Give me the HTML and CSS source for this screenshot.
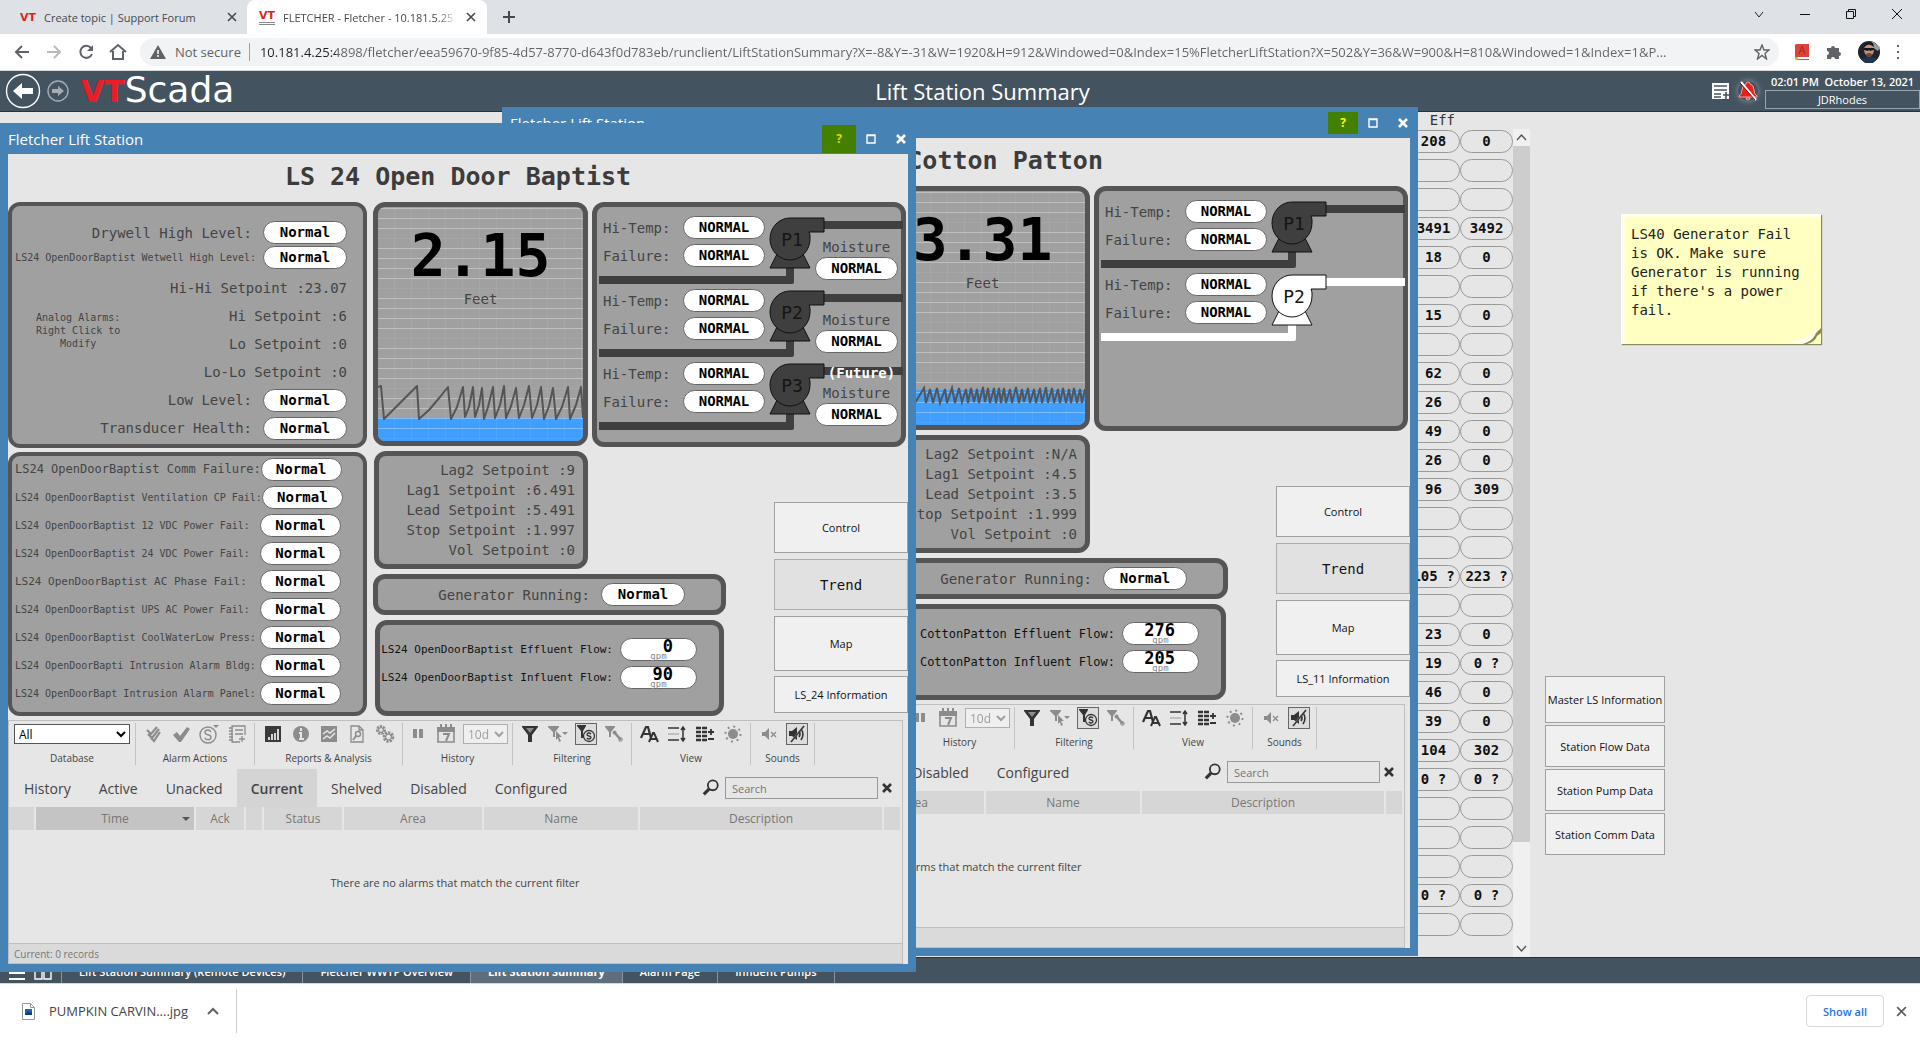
FILE: index.html
```html
<!DOCTYPE html>
<html lang="en">
<head>
    <meta charset="UTF-8">
    <meta name="viewport" content="width=device-width, initial-scale=1.0">
    <title>FLETCHER - Fletcher - 10.181.5.25</title>
    <link rel="stylesheet" href="styles.css">
</head>
<body>

<!-- icons -->
<svg class="sprite" aria-hidden="true">
    <symbol id="i-x" viewBox="0 0 10 10"><path d="M1 1l8 8M9 1l-8 8" fill="none" stroke="currentColor" stroke-width="1.6"/></symbol>
    <symbol id="i-x-bold" viewBox="0 0 10 10"><path d="M1 1l8 8M9 1l-8 8" fill="none" stroke="currentColor" stroke-width="2.6"/></symbol>
    <symbol id="i-ackall" viewBox="0 0 20 20"><path d="M4 6l4 4 6-7M5 10l4 4 7-9M8 14l3 3 6-9" fill="none" stroke="currentColor" stroke-width="2.200"/></symbol>
    <symbol id="i-ack" viewBox="0 0 20 20"><path d="M2 11l4-3 3 4 7-9 3 2-9 13H8z" fill="currentColor"/></symbol>
    <symbol id="i-shelve" viewBox="0 0 20 20"><circle cx="9" cy="11" r="8" fill="none" stroke="currentColor" stroke-width="1.4"/><path d="M12 8q-1-2-3-2-3 0-3 2.200 0 2 3 2.600 3 .6 3 2.700 0 2.300-3 2.300-2.500 0-3.200-2" fill="none" stroke="currentColor" stroke-width="1.400"/><path d="M14 1h6l-3 3z" fill="currentColor"/></symbol>
    <symbol id="i-notebook" viewBox="0 0 20 20"><path d="M18 11V2H5v16h8M8 6h8M8 10h8M15 12v6M12 15h6M2 4h4M2 7h4M2 10h4M2 13h4M2 16h4" fill="none" stroke="currentColor" stroke-width="1.3"/></symbol>
    <symbol id="i-bars" viewBox="0 0 20 20"><path d="M2 2h16v16H2z" fill="#3a3a3a"/><path d="M6 16v-3M9 16v-6M12 16V9M15 16V5" stroke="#fff" stroke-width="1.6"/></symbol>
    <symbol id="i-info" viewBox="0 0 20 20"><circle cx="10" cy="10" r="8" fill="currentColor"/><path d="M10 4v3M8 9h2v6M8 15h5" fill="none" stroke="#e6e6e6" stroke-width="2"/></symbol>
    <symbol id="i-chart" viewBox="0 0 20 20"><path d="M2 2h16v16H2z" fill="currentColor"/><path d="M4 10l4-3 3 2 5-4M4 15l4-3 3 2 5-5" fill="none" stroke="#e6e6e6" stroke-width="1.500"/></symbol>
    <symbol id="i-report" viewBox="0 0 20 20"><path d="M4 2h8l4 4v12H4zM12 2v4h4" fill="none" stroke="currentColor" stroke-width="1.3"/><circle cx="11" cy="10" r="2.500" fill="none" stroke="currentColor" stroke-width="1.4"/><path d="M9 12l-3 4" stroke="currentColor" stroke-width="1.8"/></symbol>
    <symbol id="i-gears" viewBox="0 0 20 20"><circle cx="6" cy="6" r="3.500" fill="none" stroke="currentColor" stroke-width="3" stroke-dasharray="2 1"/><circle cx="13.500" cy="13" r="4" fill="none" stroke="currentColor" stroke-width="3.500" stroke-dasharray="2 1"/><circle cx="6" cy="6" r="2.400" fill="none" stroke="currentColor"/><circle cx="13.500" cy="13" r="3" fill="none" stroke="currentColor"/></symbol>
    <symbol id="i-pause" viewBox="0 0 20 20"><path d="M5 5h4v9H5zM11 5h4v9h-4z" fill="currentColor"/></symbol>
    <symbol id="i-calendar" viewBox="0 0 20 20"><path d="M2 4h16v14H2z" fill="none" stroke="currentColor" stroke-width="1.6"/><path d="M1 3h18v5H1zM4 0h2v4H4zM9 0h2v4H9zM14 0h2v4h-2z" fill="currentColor"/><path d="M7 10h6l-3 7" fill="none" stroke="currentColor" stroke-width="2"/></symbol>
    <symbol id="i-funnel" viewBox="0 0 20 20"><path d="M2 2h16v1l-6 8v7H8v-7L2 3z" fill="currentColor"/><path d="M6 4h8l-4 5z" fill="#e6e6e6" opacity=".5"/></symbol>
    <symbol id="i-funnel-pick" viewBox="0 0 20 20"><path d="M0 2h11v1L7 8v5H5V8L0 3zM8 7l6 6h-3l2 4-2 1-1-4-2 2zM14 8h6l-3 3z" fill="currentColor"/></symbol>
    <symbol id="i-funnel-s" viewBox="0 0 20 20"><path d="M1 1h9v1L7 7v7H5V7L1 2z" fill="currentColor"/><circle cx="13" cy="12" r="5.500" fill="#dcdcdc" stroke="currentColor" stroke-width="1.300"/><path d="M15 10q-1-1-2-1-2 0-2 1.400 0 1.200 2 1.600 2 .4 2 1.600 0 1.400-2 1.400-1.200 0-2.200-1" fill="none" stroke="currentColor" stroke-width="1.300"/></symbol>
    <symbol id="i-funnel-tool" viewBox="0 0 20 20"><path d="M1 2h10v1L7 8v5H5V8L1 3z" fill="currentColor"/><path d="M10 8l7 8" stroke="currentColor" stroke-width="2.500"/><circle cx="10.500" cy="8.500" r="2" fill="currentColor"/><circle cx="16.500" cy="15.500" r="1.800" fill="none" stroke="currentColor"/></symbol>
    <symbol id="i-font" viewBox="0 0 20 20"><path d="M2 14L7 3h2l3 11M4 10h6" fill="none" stroke="currentColor" stroke-width="2.200"/><path d="M10 18l4-9h1l4 9M12 15h5" fill="none" stroke="currentColor" stroke-width="2"/></symbol>
    <symbol id="i-rows" viewBox="0 0 20 20"><path d="M1 4h11M1 16h11M16 4v12M14 6l2-3 2 3M14 14l2 3 2-3" fill="none" stroke="currentColor" stroke-width="1.500"/><path d="M1 10h11" stroke="#999"/></symbol>
    <symbol id="i-cols" viewBox="0 0 20 20"><path d="M1 4h5M1 8h5M1 12h5M1 16h5M7 4h5M7 8h5M7 12h5M7 16h5" stroke="currentColor" stroke-width="2.400"/><path d="M13 8h6M16 5v6M13 15h6" stroke="currentColor" stroke-width="1.800"/></symbol>
    <symbol id="i-sun" viewBox="0 0 20 20"><circle cx="10" cy="10" r="5" fill="currentColor"/><circle cx="10" cy="10" r="7.500" fill="none" stroke="currentColor" stroke-width="2" stroke-dasharray="2 3.900"/></symbol>
    <symbol id="i-mute" viewBox="0 0 20 20"><path d="M3 8h3l4-4v12l-4-4H3z" fill="currentColor"/><path d="M12 8l5 5M17 8l-5 5" stroke="currentColor" stroke-width="1.300"/></symbol>
    <symbol id="i-silence" viewBox="0 0 20 20"><path d="M2 7h3l5-4v13l-5-4H2z" fill="currentColor"/><path d="M12 7q2 3 0 6M14 5q4 5 0 11" fill="none" stroke="currentColor" stroke-width="1.600"/><path d="M3 19L16 3" stroke="#dcdcdc" stroke-width="1.500"/><path d="M4 18L17 2" stroke="currentColor" stroke-width="1.600"/></symbol>
    <symbol id="i-search" viewBox="0 0 20 20"><circle cx="12" cy="7" r="5.500" fill="none" stroke="currentColor" stroke-width="2"/><path d="M8 11l-6 6" stroke="currentColor" stroke-width="3.500"/></symbol>
    <symbol id="i-pump" viewBox="0 0 306 78">
        <path d="M227 14h79v8h-79zM2 69h187v-8h8v14q0 2-2 2H2z" fill="currentColor"/>
        <path d="M182 43l-9 18h40l-9-18z" fill="currentColor" stroke="#111"/>
        <path d="M227 11h-34a20 21 0 1 0 20 21v-3q0-2-1-4h15z" fill="currentColor" stroke="#111"/>
    </symbol>
    <pattern id="grid" width="17" height="50" patternUnits="userSpaceOnUse">
        <path d="M0 1.500h17M0 11.500h17M0 21.500h17M0 41.500h17" stroke="#fff" stroke-opacity=".32"/>
        <path d="M0 31.500h17M16.500 0v50" stroke="#fff" stroke-opacity=".06"/>
    </pattern>
</svg>

<header class="browser">
    <div class="tab-strip">
        <div class="browser-tab">
            <span class="favicon">VT</span>
            <span class="tab-title">Create topic | Support Forum</span>
            <button class="tab-close" aria-label="Close tab"><svg width="10" height="10"><use href="#i-x"/></svg></button>
        </div>
        <div class="browser-tab current-tab">
            <span class="favicon favicon-scada">VT</span>
            <span class="tab-title">FLETCHER - Fletcher - 10.181.5.25</span>
            <button class="tab-close" aria-label="Close tab"><svg width="10" height="10"><use href="#i-x"/></svg></button>
        </div>
        <button class="new-tab" aria-label="New tab"><svg width="12" height="12" viewBox="0 0 12 12"><path d="M6 0v12M0 6h12" stroke="currentColor" stroke-width="2"/></svg></button>
        <div class="window-controls">
            <button aria-label="Search tabs"><svg width="12" height="12" viewBox="0 0 12 12"><path d="M2 4l4 5 4-5" fill="none" stroke="#222"/></svg></button>
            <button aria-label="Minimize"><svg width="12" height="12" viewBox="0 0 12 12"><path d="M1 6.500h10" stroke="#111"/></svg></button>
            <button aria-label="Restore"><svg width="12" height="12" viewBox="0 0 12 12"><path d="M1.500 3.500h7v7h-7zM3.500 3.500v-2h7v7h-2" fill="none" stroke="#111"/></svg></button>
            <button aria-label="Close"><svg width="12" height="12" viewBox="0 0 12 12"><path d="M1 1l10 10M11 1L1 11" stroke="#111"/></svg></button>
        </div>
    </div>
    <div class="browser-toolbar">
        <button class="nav-btn" aria-label="Back"><svg width="16" height="16" viewBox="0 0 16 16"><path d="M15 8H2M8 2L2 8l6 6" fill="none" stroke="#5f6368" stroke-width="2"/></svg></button>
        <button class="nav-btn" aria-label="Forward"><svg width="16" height="16" viewBox="0 0 16 16"><path d="M1 8h13M8 2l6 6-6 6" fill="none" stroke="#b8babd" stroke-width="2"/></svg></button>
        <button class="nav-btn" aria-label="Reload"><svg width="16" height="16" viewBox="0 0 16 16"><path d="M13 4a6 6 0 1 0 1 6" fill="none" stroke="#5f6368" stroke-width="2"/><path d="M15 1v6H9z" fill="#5f6368"/></svg></button>
        <button class="nav-btn" aria-label="Home"><svg width="18" height="18" viewBox="0 0 18 18"><path d="M1 9l8-7 8 7M4 8v8h10V8" fill="none" stroke="#5f6368" stroke-width="2"/></svg></button>
        <div class="omnibox">
            <svg width="16" height="14" viewBox="0 0 16 14"><path d="M8 0l8 14H0z" fill="#5f6368"/><path d="M8 5v4M8 10v2" stroke="#fff" stroke-width="1.500"/></svg>
            <span class="not-secure">Not secure</span>
            <input class="url" type="text" aria-label="Address" value="10.181.4.25:4898/fletcher/eea59670-9f85-4d57-8770-d643f0d783eb/runclient/LiftStationSummary?X=-8&amp;Y=-31&amp;W=1920&amp;H=912&amp;Windowed=0&amp;Index=15%FletcherLiftStation?X=502&amp;Y=36&amp;W=900&amp;H=810&amp;Windowed=1&amp;Index=1&amp;P...">
            <button aria-label="Bookmark"><svg width="16" height="16" viewBox="0 0 16 16"><path d="M8 1l2 5h5l-4 3.500L12.500 15 8 11.500 3.500 15 5 9.500 1 6h5z" fill="none" stroke="#5f6368" stroke-width="1.400"/></svg></button>
        </div>
        <div class="extensions">
            <button aria-label="Dictionary"><svg width="16" height="18" viewBox="0 0 16 18"><path d="M2 1h13v13H4v2h11v1H1V2z" fill="#db4437"/><path d="M5 11l3-8 3 8M6 8h4" fill="none" stroke="#a52a20"/><path d="M1 14h3v3H1z" fill="#f4b400"/></svg></button>
            <button aria-label="Extensions"><svg width="16" height="16" viewBox="0 0 16 16"><path d="M1 4h4a2 2 0 1 1 4 0h4v4a2 2 0 1 1 0 4v3H9a2 2 0 1 0-4 0H1v-4a2 2 0 1 0 0-4z" fill="#5f6368"/></svg></button>
            <button aria-label="Profile"><svg width="22" height="22" viewBox="0 0 22 22"><circle cx="11" cy="11" r="11" fill="#20242c"/><path d="M14 0l8 6-2 4-6-4z" fill="#8f9ba6"/><ellipse cx="11" cy="9" rx="5" ry="6" fill="#c98f76"/><path d="M6 6q5-5 10 0l-1-4H7zM6 7h10v2l-4 1-1-1-1 1-4-1z" fill="#15171c"/><path d="M8 13q3-2 6 0l-1 3H9z" fill="#6b4a3c"/><path d="M3 18q8-4 16 0l-4 4H7z" fill="#1d3550"/></svg></button>
            <button aria-label="Menu"><svg width="4" height="16" viewBox="0 0 4 16"><path d="M1 1h2v2H1zM1 7h2v2H1zM1 13h2v2H1z" fill="#5f6368"/></svg></button>
        </div>
    </div>
</header>

<div class="app">
    <header class="app-header">
        <button aria-label="Back"><svg width="36" height="36" viewBox="0 0 36 36"><circle cx="18" cy="18" r="16.500" fill="none" stroke="#fff" stroke-width="1.400"/><path d="M8 18l9-8v5h11v6H17v5z" fill="#fff"/></svg></button>
        <button aria-label="Forward"><svg width="22" height="22" viewBox="0 0 22 22"><circle cx="11" cy="11" r="10" fill="none" stroke="#a5acb3" stroke-width="1.400"/><path d="M17 11l-6-5v3H5v4h6v3z" fill="#a5acb3"/></svg></button>
        <div class="logo"><span class="logo-vt">VT</span>Scada</div>
        <h1>Lift Station Summary</h1>
        <button aria-label="Notes"><svg width="18" height="18" viewBox="0 0 18 18"><path d="M0 1h17v16H0z" fill="#fff"/><path d="M2 4h13M2 8h13M2 12h7M2 15h7M11 13h6M14 10v7" stroke="#445360" stroke-width="1.600"/></svg></button>
        <button class="bell" aria-label="Alarms"><svg width="20" height="20" viewBox="0 0 20 20"><path d="M10 1q2 0 2 2 4 1 4 6 0 4 3 6v1H1v-1q3-2 3-6 0-5 4-6 0-2 2-2zM8 17h4q0 2-2 2t-2-2z" fill="#e8201c" stroke="#f6c5c4" stroke-width=".8"/><path d="M3 1l15 18" stroke="#fff" stroke-width="2"/><path d="M2 2l15 17" stroke="#900"/></svg></button>
        <div class="session">
            <span>02:01 PM&nbsp; October 13, 2021</span>
            <button class="user">JDRhodes</button>
        </div>
    </header>

    <main class="summary">
        <div class="summary-list">
            <table class="flows">
                <thead><tr><th>Eff</th><th></th></tr></thead>
                <tbody>
                    <tr><td><span>208</span></td><td><span>0</span></td></tr>
                    <tr><td><span></span></td><td><span></span></td></tr>
                    <tr><td><span></span></td><td><span></span></td></tr>
                    <tr><td><span>3491</span></td><td><span>3492</span></td></tr>
                    <tr><td><span>18</span></td><td><span>0</span></td></tr>
                    <tr><td><span></span></td><td><span></span></td></tr>
                    <tr><td><span>15</span></td><td><span>0</span></td></tr>
                    <tr><td><span></span></td><td><span></span></td></tr>
                    <tr><td><span>62</span></td><td><span>0</span></td></tr>
                    <tr><td><span>26</span></td><td><span>0</span></td></tr>
                    <tr><td><span>49</span></td><td><span>0</span></td></tr>
                    <tr><td><span>26</span></td><td><span>0</span></td></tr>
                    <tr><td><span>96</span></td><td><span>309</span></td></tr>
                    <tr><td><span></span></td><td><span></span></td></tr>
                    <tr><td><span></span></td><td><span></span></td></tr>
                    <tr><td><span>105 ?</span></td><td><span>223 ?</span></td></tr>
                    <tr><td><span></span></td><td><span></span></td></tr>
                    <tr><td><span>23</span></td><td><span>0</span></td></tr>
                    <tr><td><span>19</span></td><td><span>0 ?</span></td></tr>
                    <tr><td><span>46</span></td><td><span>0</span></td></tr>
                    <tr><td><span>39</span></td><td><span>0</span></td></tr>
                    <tr><td><span>104</span></td><td><span>302</span></td></tr>
                    <tr><td><span>0 ?</span></td><td><span>0 ?</span></td></tr>
                    <tr><td><span></span></td><td><span></span></td></tr>
                    <tr><td><span></span></td><td><span></span></td></tr>
                    <tr><td><span></span></td><td><span></span></td></tr>
                    <tr><td><span>0 ?</span></td><td><span>0 ?</span></td></tr>
                    <tr><td><span></span></td><td><span></span></td></tr>
                </tbody>
            </table>
            <div class="scrollbar">
                <svg width="17" height="17" viewBox="0 0 17 17"><path d="M4 11l4.500-5 4.500 5" fill="none" stroke="#505050" stroke-width="1.300"/></svg>
                <div class="scroll-thumb"></div>
                <svg class="scroll-down" width="17" height="17" viewBox="0 0 17 17"><path d="M4 6l4.500 5L13 6" fill="none" stroke="#505050" stroke-width="1.300"/></svg>
            </div>
        </div>
        <aside class="summary-side">
            <div class="sticky-note">
                LS40 Generator Fail is OK. Make sure Generator is running if there's a power fail.
                <svg class="fold" width="40" height="16" viewBox="0 0 40 16"><path d="M40 0v16H22q10-3 12-10z" fill="#8d8b4c"/><path d="M40 5v11H26q8-2 10-8z" fill="#ffffc8"/><path d="M0 14q24 0 31-9 2-2 9-5-5 3-6 7-3 7-16 8z" fill="#fffff4"/></svg>
            </div>
            <nav class="side-buttons">
                <button class="tall">Master LS Information</button>
                <button>Station Flow Data</button>
                <button>Station Pump Data</button>
                <button>Station Comm Data</button>
            </nav>
        </aside>
    </main>

    <nav class="page-tabs">
        <button class="page-icon" aria-label="Menu"><svg width="16" height="14" viewBox="0 0 16 14"><path d="M0 1h16M0 7h16M0 13h16" stroke="#fff" stroke-width="2"/></svg></button>
        <button class="page-icon" aria-label="Pages"><svg width="18" height="14" viewBox="0 0 18 14"><path d="M1 1h7v12H1zM10 1h7v12h-7z" fill="none" stroke="#fff" stroke-width="1.400"/></svg></button>
        <a href="#">Lift Station Summary (Remote Devices)</a>
        <a href="#">Fletcher WWTP Overview</a>
        <a href="#" class="selected">Lift Station Summary</a>
        <a href="#">Alarm Page</a>
        <a href="#">Influent Pumps</a>
    </nav>

    <!-- LS 11 -->
    <section class="station station-11">
        <div class="title-bar">
            <span>Fletcher Lift Station</span>
            <button class="help" aria-label="Help">?</button>
            <button aria-label="Maximize"><svg width="10" height="10" viewBox="0 0 10 10"><path d="M1 1h8v8H1zM1 1.500h8" fill="none" stroke="#fff" stroke-width="1.400"/></svg></button>
            <button aria-label="Close"><svg width="10" height="10"><use href="#i-x-bold"/></svg></button>
        </div>
        <div class="client">
            <h2>LS 11 Cotton Patton</h2>
            <div class="station-grid">
                <div class="col">
                    <div class="panel thin levels"></div>
                    <div class="panel thin faults"></div>
                </div>
                <div class="col-wide">
                    <div class="top-row">
                        <div class="panel chart">
                            <svg viewBox="0 0 205 234" width="205" height="234">
                                <path d="M0 199h205v35H0z" fill="#409eff"/>
                                <path d="M0 0h205v234H0z" fill="url(#grid)"/>
                                <polyline fill="none" stroke="#555" stroke-width="2" points="0,212 5,197 6,212 12,197 13,212 19,197 20,212 26,197 27,212 33,197 35,212 44,197 46,212 50,198 53,212 57,197 60,212 65,198 67,212 72,197 75,212 79,197 82,211 86,198 88,212 91,197 94,211 97,198 99,212 103,196 105,211 108,197 110,212 114,197 116,212 119,197 121,212 124,197 126,212 130,198 132,212 136,196 139,212 142,198 144,211 148,197 150,212 154,198 156,212 160,197 162,212 166,196 168,212 172,197 174,212 178,198 180,212 183,197 186,212 189,198 191,212 194,197 197,212 200,198 202,212 205,198"/>
                            </svg>
                            <strong>3.31</strong>
                            <em>Feet</em>
                        </div>
                        <div class="panel pumps">
                            <div class="pump">
                                <svg class="pump-art" width="306" height="78"><use href="#i-pump"/><text x="195" y="39">P1</text></svg>
                                <div class="pump-status">
                                    <p>Hi-Temp:<b class="pill">NORMAL</b></p>
                                    <p>Failure:<b class="pill">NORMAL</b></p>
                                </div>
                            </div>
                            <div class="pump running">
                                <svg class="pump-art" width="306" height="78"><use href="#i-pump"/><text x="195" y="39">P2</text></svg>
                                <div class="pump-status">
                                    <p>Hi-Temp:<b class="pill">NORMAL</b></p>
                                    <p>Failure:<b class="pill">NORMAL</b></p>
                                </div>
                            </div>
                        </div>
                    </div>
                    <div class="bottom-row">
                        <div class="readings">
                            <div class="panel setpoints">
                                <p>Lag2 Setpoint :N/A</p>
                                <p>Lag1 Setpoint :4.5</p>
                                <p>Lead Setpoint :3.5</p>
                                <p>Stop Setpoint :1.999</p>
                                <p>Vol Setpoint :0</p>
                            </div>
                            <div class="panel generator">Generator Running:<b class="pill">Normal</b></div>
                            <div class="panel flow text-12">
                                <p>CottonPatton Effluent Flow:<span class="pill"><b>276</b><small>gpm</small></span></p>
                                <p>CottonPatton Influent Flow:<span class="pill"><b>205</b><small>gpm</small></span></p>
                            </div>
                        </div>
                        <nav class="station-buttons">
                            <button>Control</button>
                            <button class="trend">Trend</button>
                            <button class="map">Map</button>
                            <button class="info">LS_11 Information</button>
                        </nav>
                    </div>
                </div>
            </div>
            <div class="alarms"></div>
        </div>
    </section>

    <!-- LS 24 -->
    <section class="station station-24">
        <div class="title-bar">
            <span>Fletcher Lift Station</span>
            <button class="help focused" aria-label="Help">?</button>
            <button aria-label="Maximize"><svg width="10" height="10" viewBox="0 0 10 10"><path d="M1 1h8v8H1zM1 1.500h8" fill="none" stroke="#fff" stroke-width="1.400"/></svg></button>
            <button aria-label="Close"><svg width="10" height="10"><use href="#i-x-bold"/></svg></button>
        </div>
        <div class="client">
            <h2>LS 24 Open Door Baptist</h2>
            <div class="station-grid">
                <div class="col">
                    <div class="panel thin levels">
                        <p class="alarm-row">Drywell High Level:<b class="pill">Normal</b></p>
                        <p class="alarm-row wetwell"><span class="text-10">LS24 OpenDoorBaptist Wetwell High Level:</span><b class="pill">Normal</b></p>
                        <div class="analog">
                            <p class="hint">Analog Alarms:<br>Right Click to<br>Modify</p>
                            <div class="analog-values">
                                <p>Hi-Hi Setpoint :23.07</p>
                                <p>Hi Setpoint :6</p>
                                <p>Lo Setpoint :0</p>
                                <p>Lo-Lo Setpoint :0</p>
                            </div>
                        </div>
                        <p class="alarm-row tall">Low Level:<b class="pill">Normal</b></p>
                        <p class="alarm-row tall">Transducer Health:<b class="pill">Normal</b></p>
                    </div>
                    <div class="panel thin faults">
                        <p class="text-12">LS24 OpenDoorBaptist Comm Failure:<b class="pill">Normal</b></p>
                        <p class="text-10">LS24 OpenDoorBaptist Ventilation CP Fail:<b class="pill">Normal</b></p>
                        <p class="text-10">LS24 OpenDoorBaptist 12 VDC Power Fail:<b class="pill">Normal</b></p>
                        <p class="text-10">LS24 OpenDoorBaptist 24 VDC Power Fail:<b class="pill">Normal</b></p>
                        <p class="text-11">LS24 OpenDoorBaptist AC Phase Fail:<b class="pill">Normal</b></p>
                        <p class="text-10">LS24 OpenDoorBaptist UPS AC Power Fail:<b class="pill">Normal</b></p>
                        <p class="text-10">LS24 OpenDoorBaptist CoolWaterLow Press:<b class="pill">Normal</b></p>
                        <p class="text-10">LS24 OpenDoorBapti Intrusion Alarm Bldg:<b class="pill">Normal</b></p>
                        <p class="text-10">LS24 OpenDoorBapt Intrusion Alarm Panel:<b class="pill">Normal</b></p>
                    </div>
                </div>
                <div class="col-wide">
                    <div class="top-row">
                        <div class="panel chart">
                            <svg viewBox="0 0 205 234" width="205" height="234">
                                <path d="M0 211h205v23H0z" fill="#409eff"/>
                                <path d="M0 0h205v234H0z" fill="url(#grid)"/>
                                <polyline fill="none" stroke="#555" stroke-width="2" stroke-linejoin="round" points="0,180 3,179 6,212 15,203 24,194 30,188 39,179 41,212 51,203 62,190 70,180 73,212 79,200 85,180 87,210 91,200 95,180 97,210 101,198 104,181 106,212 110,200 115,180 117,211 122,198 126,179 128,211 133,199 138,181 141,211 146,198 151,179 154,211 159,198 163,180 166,212 171,199 175,181 178,212 184,200 190,180 192,212 198,198 203,180 205,211"/>
                            </svg>
                            <strong>2.15</strong>
                            <em>Feet</em>
                        </div>
                        <div class="panel pumps">
                            <div class="pump">
                                <svg class="pump-art" width="306" height="78"><use href="#i-pump"/><text x="195" y="39">P1</text></svg>
                                <div class="pump-status">
                                    <p>Hi-Temp:<b class="pill">NORMAL</b></p>
                                    <p>Failure:<b class="pill">NORMAL</b></p>
                                </div>
                                <div class="moisture">Moisture<b class="pill">NORMAL</b></div>
                            </div>
                            <div class="pump">
                                <svg class="pump-art" width="306" height="78"><use href="#i-pump"/><text x="195" y="39">P2</text></svg>
                                <div class="pump-status">
                                    <p>Hi-Temp:<b class="pill">NORMAL</b></p>
                                    <p>Failure:<b class="pill">NORMAL</b></p>
                                </div>
                                <div class="moisture">Moisture<b class="pill">NORMAL</b></div>
                            </div>
                            <div class="pump">
                                <svg class="pump-art" width="306" height="78"><use href="#i-pump"/><text x="195" y="39">P3</text></svg>
                                <div class="pump-status">
                                    <p>Hi-Temp:<b class="pill">NORMAL</b></p>
                                    <p>Failure:<b class="pill">NORMAL</b></p>
                                </div>
                                <div class="moisture"><strong>(Future)</strong>Moisture<b class="pill">NORMAL</b></div>
                            </div>
                        </div>
                    </div>
                    <div class="bottom-row">
                        <div class="readings">
                            <div class="panel setpoints">
                                <p>Lag2 Setpoint :9</p>
                                <p>Lag1 Setpoint :6.491</p>
                                <p>Lead Setpoint :5.491</p>
                                <p>Stop Setpoint :1.997</p>
                                <p>Vol Setpoint :0</p>
                            </div>
                            <div class="panel generator">Generator Running:<b class="pill">Normal</b></div>
                            <div class="panel flow text-11">
                                <p>LS24 OpenDoorBaptist Effluent Flow:<span class="pill"><b>0</b><small>gpm</small></span></p>
                                <p>LS24 OpenDoorBaptist Influent Flow:<span class="pill"><b>90</b><small>gpm</small></span></p>
                            </div>
                        </div>
                        <nav class="station-buttons">
                            <button>Control</button>
                            <button class="trend">Trend</button>
                            <button class="map">Map</button>
                            <button class="info">LS_24 Information</button>
                        </nav>
                    </div>
                </div>
            </div>
            <div class="alarms"></div>
        </div>
    </section>
</div>

<footer class="downloads">
    <svg width="13" height="17" viewBox="0 0 13 17"><path d="M.5.5h8l4 4v12H.5zM8.500.5v4h4" fill="#fff" stroke="#999"/><path d="M3 6h7v6H3z" fill="#1667b7"/><path d="M3 12l3-4 2 2 2-1v3z" fill="#123b72"/></svg>
    <span class="file">PUMPKIN CARVIN....jpg</span>
    <button aria-label="File options"><svg width="12" height="8" viewBox="0 0 12 8"><path d="M1 7l5-5 5 5" fill="none" stroke="#5f6368" stroke-width="2"/></svg></button>
    <span class="divider"></span>
    <button class="show-all">Show all</button>
    <button class="close-bar" aria-label="Close"><svg width="11" height="11"><use href="#i-x"/></svg></button>
</footer>

<!-- alarm list shared by every station window -->
<template id="alarm-list">
    <div class="tools">
        <div class="tool-group database"><div><select aria-label="Database"><option>All</option></select></div><span>Database</span></div>
        <div class="tool-group actions">
            <div>
                <button aria-label="Ack all"><svg><use href="#i-ackall"/></svg></button>
                <button aria-label="Ack"><svg><use href="#i-ack"/></svg></button>
                <button aria-label="Shelve"><svg><use href="#i-shelve"/></svg></button>
                <button aria-label="Notes"><svg><use href="#i-notebook"/></svg></button>
            </div>
            <span>Alarm Actions</span>
        </div>
        <div class="tool-group reports">
            <div>
                <button aria-label="Statistics"><svg><use href="#i-bars"/></svg></button>
                <button aria-label="Details"><svg><use href="#i-info"/></svg></button>
                <button aria-label="Plot"><svg><use href="#i-chart"/></svg></button>
                <button aria-label="Report"><svg><use href="#i-report"/></svg></button>
                <button aria-label="Configure"><svg><use href="#i-gears"/></svg></button>
            </div>
            <span>Reports &amp; Analysis</span>
        </div>
        <div class="tool-group history">
            <div>
                <button aria-label="Pause"><svg><use href="#i-pause"/></svg></button>
                <button aria-label="Date"><svg><use href="#i-calendar"/></svg></button>
                <select aria-label="Duration" disabled><option>10d</option></select>
            </div>
            <span>History</span>
        </div>
        <div class="tool-group actions">
            <div>
                <button class="dark" aria-label="Filter"><svg><use href="#i-funnel"/></svg></button>
                <button aria-label="Pick filter"><svg><use href="#i-funnel-pick"/></svg></button>
                <button class="dark pressed" aria-label="Shelved filter"><svg><use href="#i-funnel-s"/></svg></button>
                <button aria-label="Filter settings"><svg><use href="#i-funnel-tool"/></svg></button>
            </div>
            <span>Filtering</span>
        </div>
        <div class="tool-group actions">
            <div>
                <button class="dark" aria-label="Font size"><svg><use href="#i-font"/></svg></button>
                <button class="dark" aria-label="Row height"><svg><use href="#i-rows"/></svg></button>
                <button class="dark" aria-label="Columns"><svg><use href="#i-cols"/></svg></button>
                <button aria-label="Brightness"><svg><use href="#i-sun"/></svg></button>
            </div>
            <span>View</span>
        </div>
        <div class="tool-group sounds">
            <div>
                <button aria-label="Mute"><svg><use href="#i-mute"/></svg></button>
                <button class="dark pressed" aria-label="Silence"><svg><use href="#i-silence"/></svg></button>
            </div>
            <span>Sounds</span>
        </div>
    </div>
    <div class="alarm-tabs">
        <button>History</button>
        <button>Active</button>
        <button>Unacked</button>
        <button class="selected">Current</button>
        <button>Shelved</button>
        <button>Disabled</button>
        <button>Configured</button>
        <svg class="search-icon" width="18" height="18"><use href="#i-search"/></svg>
        <input type="text" placeholder="Search" aria-label="Search">
        <button class="clear" aria-label="Clear"><svg width="10" height="10"><use href="#i-x-bold"/></svg></button>
    </div>
    <table class="alarm-table">
        <colgroup><col class="c-icon"><col class="c-time"><col class="c-ack"><col class="c-flag"><col class="c-status"><col class="c-area"><col class="c-name"><col class="c-desc"><col></colgroup>
        <thead><tr><th></th><th class="sorted">Time<i></i></th><th>Ack</th><th></th><th>Status</th><th>Area</th><th>Name</th><th>Description</th><th></th></tr></thead>
        <tbody><tr><td colspan="9">There are no alarms that match the current filter</td></tr></tbody>
    </table>
    <div class="alarm-footer">Current: 0 records</div>
</template>

<script>
    const alarmList = document.getElementById('alarm-list');
    document.querySelectorAll('.alarms').forEach(el => {
        el.appendChild(alarmList.content.cloneNode(true));
    });
</script>

</body>
</html>
```
FILE: styles.css
```css
:root {
    --mono: "DejaVu Sans Mono", monospace;
    --ui: "Open Sans", "Noto Sans", sans-serif;
}
* {
    box-sizing: border-box;
}
body {
    margin: 0;
    height: 100vh;
    display: flex;
    flex-direction: column;
    overflow: hidden;
    font-family: var(--ui);
    font-size: 12px;
    background: #fff;
    color: #333;
}
p, h1, h2 {
    margin: 0;
}
button {
    padding: 0;
    border: 0;
    background: none;
    font-family: inherit;
    font-size: inherit;
    color: inherit;
}
button svg, .omnibox svg {
    display: block;
}
em {
    font-style: normal;
}
.sprite {
    position: absolute;
    width: 0;
    height: 0;
}

/* browser */
.tab-strip {
    display: flex;
    height: 34px;
    background: #dee1e6;
}
.browser-tab {
    width: 240px;
    display: flex;
    align-items: center;
    gap: 8px;
    padding: 0 7px 0 12px;
    color: #45494d;
}
.browser-tab:first-child {
    width: 247px;
    padding: 0 6px 0 20px;
}
.current-tab {
    background: #fff;
    border-radius: 8px 8px 0 0;
}
.favicon {
    width: 16px;
    font: bold 11px "DejaVu Sans", sans-serif;
    color: #e2231a;
}
.favicon-scada {
    border-bottom: 3px double #888;
}
.tab-title {
    flex: 1;
    overflow: hidden;
    white-space: nowrap;
    font-size: 11px;
}
.current-tab .tab-title {
    mask-image: linear-gradient(90deg, #000 88%, transparent);
}
.tab-close {
    width: 14px;
    color: #45494d;
}
.new-tab {
    width: 44px;
    padding-left: 16px;
    color: #45494d;
}
.window-controls {
    margin-left: auto;
    display: flex;
    height: 28px;
}
.window-controls button {
    width: 46px;
    padding-left: 17px;
}
.browser-toolbar {
    display: flex;
    align-items: center;
    height: 37px;
    padding-left: 6px;
    border-bottom: 1px solid #d5d8da;
}
.nav-btn {
    width: 32px;
    display: flex;
    justify-content: center;
}
.nav-btn:nth-child(4) {
    margin-right: 6px;
}
.omnibox {
    flex: 1;
    display: flex;
    align-items: center;
    height: 28px;
    padding: 0 9px 0 10px;
    border-radius: 14px;
    background: #f1f3f4;
}
.not-secure {
    margin-left: 9px;
    padding-right: 8px;
    border-right: 1px solid #9aa0a6;
    font-size: 13px;
    color: #5f6368;
}
.url {
    flex: 1;
    min-width: 0;
    margin-left: 10px;
    padding: 0;
    border: 0;
    outline: 0;
    font-family: var(--ui);
    font-size: 13px;
    text-overflow: ellipsis;
    color: transparent;
    background: linear-gradient(90deg, #202124 76px, #5f6368 76px);
    background-clip: text;
    -webkit-background-clip: text;
}
.extensions {
    width: 141px;
    padding: 0 20px 0 15px;
    display: flex;
    justify-content: space-between;
    align-items: center;
}

/* application */
.app {
    position: relative;
    flex: 1;
    display: flex;
    flex-direction: column;
    background: #e6e6e6;
}
.app-header {
    display: flex;
    align-items: center;
    height: 41px;
    padding-left: 5px;
    border-bottom: 1px solid #26333d;
    background: #445360;
    color: #fff;
}
.app-header > button + button {
    margin-left: 6px;
}
.logo {
    margin-left: 12px;
    width: 172px;
    font: 36px "DejaVu Sans", sans-serif;
    line-height: 36px;
    white-space: nowrap;
}
.logo-vt {
    font-size: 30px;
    font-weight: bold;
    color: #ee1c25;
}
.app-header h1 {
    flex: 1;
    text-align: center;
    font-size: 22px;
    font-weight: 400;
}
.app-header .bell {
    margin-left: 8px;
    border-radius: 50%;
    box-shadow: 0 0 6px #8f9aa5;
}
.session {
    width: 155px;
    margin-left: 7px;
    display: flex;
    flex-direction: column;
    align-items: center;
    gap: 1px;
    font-size: 11px;
    font-weight: 600;
    white-space: nowrap;
}
.user {
    width: 100%;
    height: 19px;
    border: 1px solid #9aa5ae;
    text-align: center;
}
.summary {
    flex: 1;
    display: flex;
}
.summary-list {
    flex: 1;
    display: flex;
    justify-content: flex-end;
}
.flows {
    width: 106px;
    border-collapse: collapse;
    table-layout: fixed;
    align-self: flex-start;
    font: bold 14px var(--mono);
    color: #111;
}
.flows th {
    height: 15px;
    padding: 0 5px 0 0;
    text-align: right;
    font-weight: 400;
    line-height: 14px;
    color: #333;
}
.flows td {
    height: 29px;
    padding: 0;
}
.flows span {
    display: block;
    height: 23px;
    border: 1px solid #999;
    border-radius: 12px;
    text-align: center;
    line-height: 21px;
    white-space: nowrap;
}
.scrollbar {
    width: 17px;
    margin-top: 17px;
    display: flex;
    flex-direction: column;
    background: #f0f0f0;
}
.scroll-thumb {
    height: 84%;
    background: #cdcdcd;
}
.scroll-down {
    margin-top: auto;
}
.summary-side {
    width: 390px;
    display: flex;
    flex-direction: column;
    padding: 102px 15px 0;
}
.sticky-note {
    position: relative;
    width: 200px;
    min-height: 130px;
    margin-left: 76px;
    padding: 11px 10px;
    background: #ffffc2;
    box-shadow: inset 4px 3px 3px #fffff2, 1px 1px 1px #8a8a60;
    font: 14px var(--mono);
    line-height: 19px;
    color: #222;
}
.fold {
    position: absolute;
    right: 0;
    bottom: 0;
}
.side-buttons {
    width: 120px;
    margin-top: 332px;
    display: flex;
    flex-direction: column;
    gap: 2px;
}
.side-buttons button, .station-buttons button {
    border: 1px solid #a0a0a0;
    background: #f0f0f0;
    color: #111;
    white-space: nowrap;
}
.side-buttons button {
    height: 42px;
    font-size: 11px;
}
.side-buttons .tall {
    height: 47px;
}
.page-tabs {
    display: flex;
    height: 27px;
    border-top: 1px solid #26333d;
    border-bottom: 1px solid #d5d8da;
    background: #445360;
    color: #fff;
}
.page-icon {
    display: flex;
    align-items: center;
    padding: 4px 0 0 9px;
}
.page-icon + a {
    margin-left: 9px;
    border-left: 1px solid #8b96a0;
}
.page-tabs a {
    padding: 0 17px;
    border-right: 1px solid #8b96a0;
    color: #fff;
    font-size: 11px;
    font-weight: 600;
    line-height: 27px;
    text-decoration: none;
}
.page-tabs .selected {
    background: #5f6e7b;
    font-weight: 700;
}

/* station windows */
.station {
    position: absolute;
    width: 916px;
    background: #e6e6e6;
    border: solid #4682b4;
    border-width: 0 8px 8px;
}
.station-11 {
    left: 502px;
    top: 36px;
}
.station-24 {
    left: 0;
    top: 52px;
}
.title-bar {
    display: flex;
    align-items: center;
    height: 31px;
    margin-right: -8px;
    background: #4682b4;
    color: #fff;
    font-size: 15px;
}
.title-bar span {
    flex: 1;
}
.title-bar button {
    width: 30px;
    display: flex;
    justify-content: center;
    align-items: center;
}
.title-bar .help {
    height: 22px;
    background: #448000;
    color: #ff0;
    font-size: 12px;
    font-weight: 700;
}
.title-bar .focused {
    width: 34px;
    height: 28px;
    color: #e0d800;
}
.client {
    display: flex;
    flex-direction: column;
    height: 810px;
    font-family: var(--mono);
    font-size: 14px;
    color: #444;
}
.client h2 {
    height: 48px;
    text-align: center;
    font-size: 25px;
    line-height: 45px;
    color: #3c3c3c;
}
.station-grid {
    display: flex;
    gap: 6px;
    height: 514px;
}
.panel {
    border: 5px solid #555;
    border-radius: 12px;
    background: #a0a0a0;
}
.thin {
    border-width: 4px;
}
.pill {
    flex: none;
    width: 84px;
    height: 23px;
    border: 1px solid #666;
    border-radius: 12px;
    background: #fff;
    color: #000;
    font-size: 14px;
    line-height: 21px;
    text-align: center;
}
.text-12 {
    font-size: 12px;
}
.text-11 {
    font-size: 11px;
}
.text-10 {
    font-size: 10px;
}
.col {
    width: 359px;
    display: flex;
    flex-direction: column;
    gap: 4px;
}
.levels {
    height: 246px;
    padding: 14px 16px 0 0;
    white-space: nowrap;
}
.alarm-row {
    display: flex;
    justify-content: flex-end;
    align-items: center;
    gap: 11px;
    height: 25px;
}
.wetwell {
    gap: 7px;
    margin-bottom: 4px;
}
.alarm-row.tall {
    height: 28px;
}
.analog {
    display: flex;
    justify-content: space-between;
    align-items: center;
    padding-left: 24px;
}
.hint {
    font-size: 10px;
    line-height: 13px;
    text-align: center;
}
.analog-values {
    text-align: right;
    line-height: 28px;
}
.faults {
    height: 264px;
    display: flex;
    flex-direction: column;
    gap: 2px;
}
.faults p {
    display: flex;
    justify-content: space-between;
    align-items: center;
    height: 26px;
    padding: 0 22px 0 3px;
    white-space: nowrap;
}
.faults .pill {
    width: 81px;
}
.col-wide {
    flex: 1;
}
.top-row {
    display: flex;
    gap: 4px;
}
.chart {
    width: 215px;
    height: 244px;
    display: grid;
    grid-template-rows: 20px 58px 28px 1fr;
    justify-items: center;
    overflow: hidden;
}
.chart svg {
    grid-area: 1 / 1 / -1 / 2;
}
.chart strong {
    grid-area: 2 / 1;
    font-size: 58px;
    line-height: 58px;
    color: #000;
}
.chart em {
    grid-area: 3 / 1;
    line-height: 28px;
}
.pumps {
    width: 314px;
    height: 245px;
}
.pump {
    display: grid;
    grid-template-columns: 218px 83px;
    grid-template-rows: 73px;
    color: #3f3f3f;
}
.running {
    color: #fff;
}
.pump-art {
    grid-area: 1 / 1 / 2 / 3;
    overflow: visible;
}
.pump-art text {
    font-size: 18px;
    text-anchor: middle;
    fill: #151515;
}
.pump-status {
    grid-area: 1 / 1;
    padding: 9px 0 0 6px;
    display: flex;
    flex-direction: column;
    gap: 5px;
    color: #444;
}
.pump-status p {
    display: grid;
    grid-template-columns: 80px 82px;
    align-items: center;
}
.pump-status .pill, .moisture .pill {
    width: 100%;
}
.moisture {
    grid-area: 1 / 2;
    display: flex;
    flex-direction: column;
    justify-content: flex-end;
    align-items: center;
    color: #444;
    line-height: 20px;
}
.moisture strong {
    margin-left: 10px;
    color: #fff;
}
.bottom-row {
    display: flex;
    justify-content: space-between;
    margin-top: 4px;
}
.readings {
    display: flex;
    flex-direction: column;
    gap: 5px;
}
.setpoints {
    width: 214px;
    height: 118px;
    margin-left: 1px;
    padding: 4px 8px 0 0;
    text-align: right;
    line-height: 20px;
}
.generator {
    display: flex;
    justify-content: flex-end;
    align-items: center;
    gap: 11px;
    width: 353px;
    height: 41px;
    padding-right: 36px;
}
.flow {
    display: flex;
    flex-direction: column;
    gap: 5px;
    width: 349px;
    height: 96px;
    margin-left: 2px;
    padding: 13px 22px 0 0;
    color: #111;
}
.flow p {
    display: flex;
    justify-content: flex-end;
    align-items: center;
    gap: 7px;
    white-space: nowrap;
}
.flow .pill {
    width: 77px;
    display: grid;
    line-height: 14px;
}
.flow b {
    padding-right: 23px;
    text-align: right;
    font-size: 17px;
}
.flow small {
    font-size: 9px;
    line-height: 7px;
    color: #888;
}
.station-buttons {
    width: 134px;
    padding-top: 51px;
    display: flex;
    flex-direction: column;
    gap: 6px;
}
.station-buttons button {
    height: 51px;
    font-family: var(--ui);
    font-size: 11px;
}
.station-buttons .trend {
    background: #e1e1e1;
    border-color: #adadad;
    font-family: var(--mono);
    font-size: 14px;
}
.station-buttons .map {
    height: 55px;
}
.station-buttons .info {
    height: 37px;
    margin-top: -1px;
}

/* alarm list */
.alarms {
    flex: 1;
    display: flex;
    flex-direction: column;
    margin: 4px 5px 0 0;
    border: 1px solid #bfbfbf;
    font-family: var(--ui);
    font-size: 12px;
}
.tools {
    display: flex;
    padding-top: 2px;
}
.tool-group {
    display: flex;
    flex-direction: column;
    gap: 6px;
    height: 42px;
    border-right: 1px solid #c4c4c4;
    text-align: center;
    font-size: 10px;
}
.tool-group div {
    display: flex;
    justify-content: center;
    align-items: center;
    gap: 6px;
    height: 22px;
}
.tool-group button {
    width: 22px;
    height: 22px;
    color: #8c8c8c;
}
.tool-group button svg {
    width: 20px;
    height: 20px;
    margin: auto;
}
.tool-group .dark {
    color: #333;
}
.tool-group .pressed {
    border: 1px solid #666;
    background: #dcdcdc;
}
.database {
    width: 127px;
}
.actions {
    width: 119px;
}
.reports {
    width: 148px;
}
.history {
    width: 110px;
}
.sounds {
    width: 64px;
}
.tool-group select {
    width: 116px;
    height: 20px;
    border: 1px solid #555;
    background: #fff;
    font-family: var(--ui);
    font-size: 12px;
}
.history select {
    width: 45px;
    border-color: #999;
    background: #f4f4f4;
}
.alarm-tabs {
    display: flex;
    align-items: center;
    height: 38px;
    margin-top: 4px;
    padding-left: 1px;
    font-size: 14px;
    color: #444;
}
.alarm-tabs button {
    height: 38px;
    padding: 0 14px;
}
.alarm-tabs .selected {
    background: #d4d4d4;
    font-weight: 600;
}
.search-icon {
    margin-left: auto;
    color: #333;
}
.alarm-tabs input {
    width: 153px;
    height: 22px;
    margin-left: 5px;
    padding: 0 6px;
    border: 1px solid #999;
    background: #e6e6e6;
    font-family: var(--ui);
    font-size: 11px;
}
.alarm-tabs .clear {
    width: 24px;
    padding: 0 0 0 4px;
    color: #333;
}
.alarm-table {
    flex: 1;
    width: 100%;
    table-layout: fixed;
    border-collapse: collapse;
}
.alarm-table th {
    height: 23px;
    padding: 0;
    border-right: 2px solid #e6e6e6;
    background: #d6d6d6;
    color: #777;
    font-weight: 400;
}
.alarm-table .sorted {
    background: #c4c4c4;
}
.sorted i {
    float: right;
    margin: 7px 4px 0 -12px;
    border: 4px solid transparent;
    border-top-color: #555;
}
.alarm-table td {
    height: 112px;
    padding: 0 0 8px;
    text-align: center;
    font-size: 11px;
}
.c-icon { width: 26px; }
.c-time { width: 160px; }
.c-ack { width: 50px; }
.c-flag { width: 18px; }
.c-status { width: 80px; }
.c-area { width: 140px; }
.c-name { width: 156px; }
.c-desc { width: 244px; }
.alarm-footer {
    height: 20px;
    padding-left: 5px;
    border-top: 1px solid #bfbfbf;
    background: #dadada;
    font-size: 10px;
    line-height: 20px;
    color: #777;
}

/* downloads */
.downloads {
    display: flex;
    align-items: center;
    height: 56px;
    padding: 0 13px 2px 22px;
}
.file {
    width: 149px;
    margin-left: 14px;
    font-size: 13px;
    color: #444;
}
.downloads button {
    margin-left: 9px;
}
.divider {
    width: 1px;
    height: 44px;
    margin-left: 17px;
    background: #ccc;
}
.downloads .show-all {
    width: 78px;
    height: 32px;
    margin-left: auto;
    border: 1px solid #d5d8dc;
    border-radius: 4px;
    font-size: 11px;
    font-weight: 600;
    color: #1a73e8;
}
.downloads .close-bar {
    margin-left: 12px;
    color: #5f6368;
}
```
